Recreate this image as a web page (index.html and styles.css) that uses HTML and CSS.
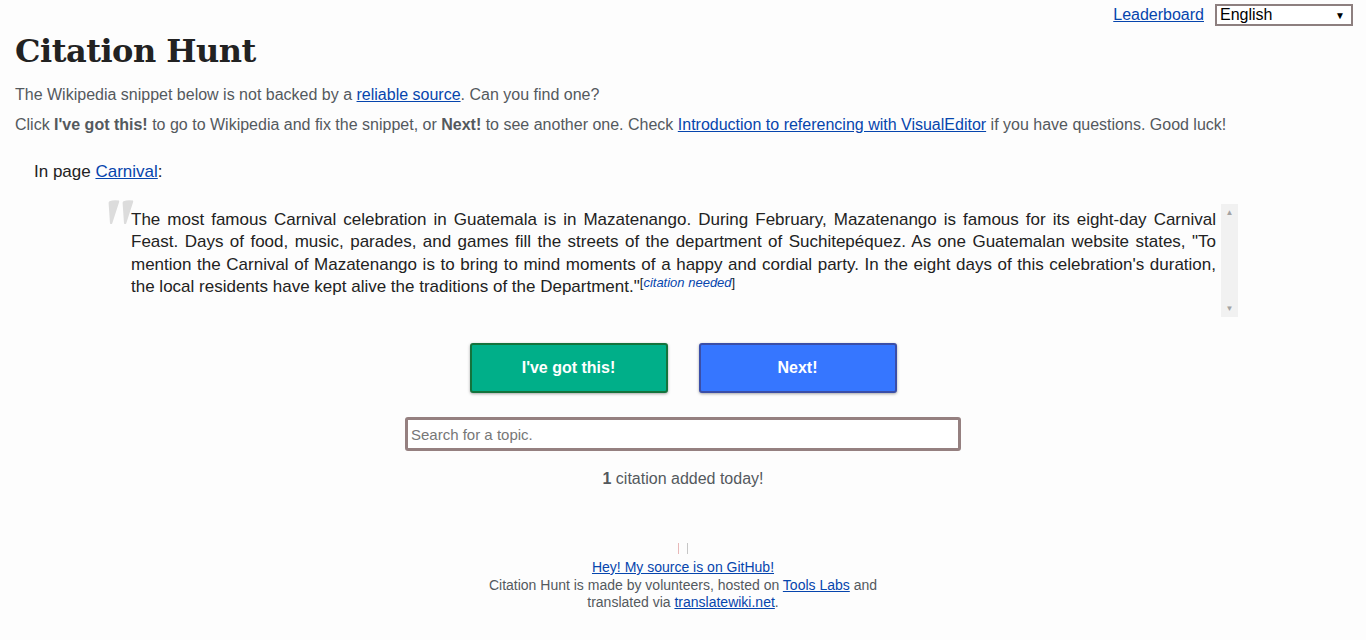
FILE: index.html
```html
<!DOCTYPE html>
<html lang="en">
<head>
<meta charset="utf-8">
<title>Citation Hunt</title>
<link rel="stylesheet" href="styles.css">
</head>
<body>
<header class="topbar">
  <a href="#" class="leaderboard">Leaderboard</a>
  <div class="lang-select"><span>English</span><span class="caret">&#9660;</span></div>
</header>
<main class="page">
  <h1 class="title">Citation Hunt</h1>
  <p class="intro">The Wikipedia snippet below is not backed by a <a href="#">reliable source</a>. Can you find one?</p>
  <p class="intro">Click <b>I've got this!</b> to go to Wikipedia and fix the snippet, or <b>Next!</b> to see another one. Check <a href="#">Introduction to referencing with VisualEditor</a> if you have questions. Good luck!</p>
  <p class="in-page">In page <a href="#">Carnival</a>:</p>
  <div class="snippet">
    <svg class="quote-mark" width="30" height="28" viewBox="0 0 30 28" aria-hidden="true">
      <path d="M4.5 2.2 Q9 0.6 14 1.6 Q14.4 2.4 14 3.6 L7.2 24.5 Q6 25.6 5 24.4 L3.6 4 Q3.6 2.8 4.5 2.2 Z" fill="#dcdcdc"/>
      <path d="M18.5 2.2 Q23 0.6 28 1.6 Q28.4 2.4 28 3.6 L21.2 24.5 Q20 25.6 19 24.4 L17.6 4 Q17.6 2.8 18.5 2.2 Z" fill="#dcdcdc"/>
    </svg>
    <div class="snippet-text">The most famous Carnival celebration in Guatemala is in Mazatenango. During February, Mazatenango is famous for its eight-day Carnival Feast. Days of food, music, parades, and games fill the streets of the department of Suchitepéquez. As one Guatemalan website states, "To mention the Carnival of Mazatenango is to bring to mind moments of a happy and cordial party. In the eight days of this celebration's duration, the local residents have kept alive the traditions of the Department."<sup class="cn">[<a href="#"><i>citation needed</i></a>]</sup></div>
    <div class="scrollbar"><span class="arrow">&#9650;</span><span class="arrow">&#9660;</span></div>
  </div>
  <div class="actions">
    <button class="btn btn-green">I've got this!</button>
    <button class="btn btn-blue">Next!</button>
  </div>
  <div class="search-row"><input class="search" type="text" placeholder="Search for a topic."></div>
  <p class="count"><b>1</b> citation added today!</p>
  <footer class="footer">
    <div class="marks"><span class="mark pink"></span><span class="mark gray"></span></div>
    <a href="#">Hey! My source is on GitHub!</a><br>
    Citation Hunt is made by volunteers, hosted on <a href="#">Tools Labs</a> and<br>
    translated via <a href="#">translatewiki.net</a>.
  </footer>
</main>
</body>
</html>
```
FILE: styles.css
```css
html, body {
  margin: 0;
  padding: 0;
  background: #fdfdfd;
  font-family: "Liberation Sans", Arial, sans-serif;
  font-size: 16px;
  color: #54595d;
}
a { color: #0645ad; text-decoration: underline; }

.topbar {
  display: flex;
  justify-content: flex-end;
  align-items: center;
  gap: 11px;
  padding: 4px 13px 0 0;
  height: 22px;
}
.leaderboard { font-size: 16px; }
.lang-select {
  box-sizing: border-box;
  width: 138px;
  height: 22px;
  border: 2px solid #8d7f7f;
  background: #fff;
  color: #000;
  display: flex;
  align-items: center;
  justify-content: space-between;
  padding: 0 6px 0 3px;
  font-size: 16px;
}
.caret { font-size: 10px; }

.page { padding: 0 15px; }
.title {
  font-family: "DejaVu Serif", Georgia, serif;
  font-size: 32px;
  font-weight: bold;
  color: #222;
  margin: 5px 0 0 0;
  line-height: 40px;
  letter-spacing: -0.5px;
}
.intro { margin: 15px 0 0 0; line-height: 18px; }
.intro + .intro { margin-top: 12px; }
.intro b { color: #54595d; }

.in-page {
  margin: 29px 0 0 19px;
  color: #222;
  font-size: 17px;
  line-height: 18px;
}

.snippet {
  display: flex;
  margin: 23px 113px 0 90px;
  height: 113px;
}
.quote-mark {
  width: 30px;
  height: 28px;
  flex: none;
  margin: -5px -4px 0 0;
}
.snippet-text {
  flex: 1;
  color: #222;
  font-size: 17px;
  text-align: justify;
  line-height: 22.3px;
  padding-top: 5px;
}
.cn { font-size: 13px; line-height: 1; vertical-align: 5px; }
.cn a { color: #0645ad; text-decoration: none; }
.scrollbar {
  flex: none;
  width: 17px;
  margin-left: 5px;
  background: #f1f1f1;
  display: flex;
  flex-direction: column;
  justify-content: space-between;
  align-items: center;
  color: #a3a3a3;
  font-size: 8px;
  padding: 4px 0;
  box-sizing: border-box;
}

.actions {
  display: flex;
  justify-content: center;
  gap: 31px;
  margin-top: 26px;
}
.btn {
  width: 198px;
  height: 50px;
  border-radius: 3px;
  color: #fff;
  font-family: "Liberation Sans", Arial, sans-serif;
  font-size: 16px;
  font-weight: bold;
  box-shadow: 0 1px 3px rgba(0,0,0,0.35);
}
.btn-green { background: #00af89; border: 2px solid #14733c; }
.btn-blue { background: #3676ff; border: 2px solid #3a4ea8; }

.search-row {
  display: flex;
  justify-content: center;
  margin-top: 24px;
}
.search {
  box-sizing: border-box;
  width: 556px;
  height: 34px;
  border: 3px solid #958080;
  border-radius: 3px;
  background: #fff;
  font-family: "Liberation Sans", Arial, sans-serif;
  font-size: 15px;
  padding: 0 3px;
  color: #222;
}
.search::placeholder { color: #777; }

.count {
  text-align: center;
  margin: 18px 0 0 0;
  line-height: 20px;
}

.footer {
  text-align: center;
  font-size: 14px;
  line-height: 17.5px;
  margin-top: 54px;
}
.marks {
  display: flex;
  justify-content: center;
  gap: 8px;
  height: 12px;
  margin-bottom: 4px;
}
.mark { width: 1px; height: 11px; }
.mark.pink { background: #e8b8b8; }
.mark.gray { background: #c6c6c6; }
```
